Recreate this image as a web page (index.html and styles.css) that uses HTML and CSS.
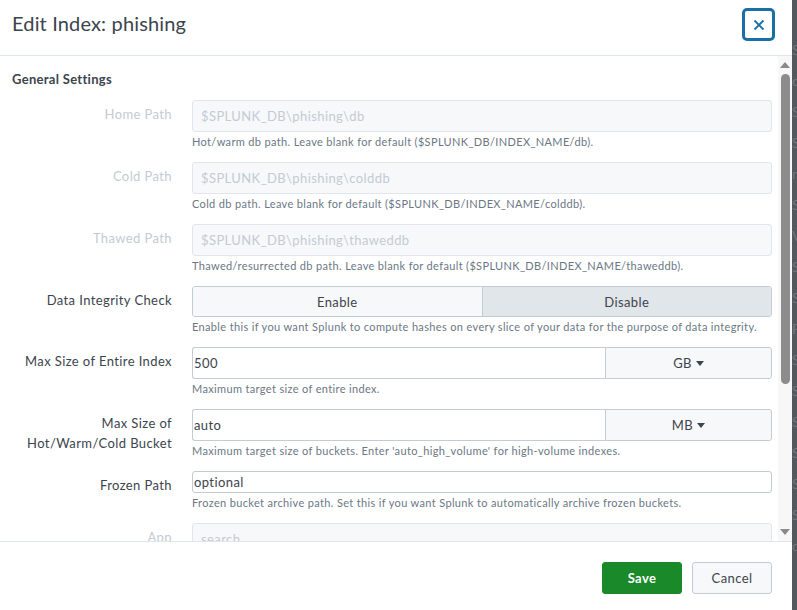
FILE: index.html
```html
<!DOCTYPE html>
<html>
<head>
<meta charset="utf-8">
<link rel="stylesheet" href="styles.css">
</head>
<body>
<div class="page">
  <div class="modal">
    <div class="header">
      <h1 class="title">Edit Index: phishing</h1>
      <button class="close" aria-label="Close">
        <svg width="12" height="12" viewBox="0 0 12 12"><path d="M1.5 1.5 L10.5 10.5 M10.5 1.5 L1.5 10.5" stroke="#1a70a6" stroke-width="1.8" fill="none"/></svg>
      </button>
    </div>
    <div class="body">
      <div class="content">
        <div class="section">General Settings</div>
        <div class="form">
          <div class="label disabled">Home Path</div>
          <div class="control">
            <div class="input input-disabled">$SPLUNK_DB\phishing\db</div>
            <div class="help">Hot/warm db path. Leave blank for default ($SPLUNK_DB/INDEX_NAME/db).</div>
          </div>

          <div class="label disabled">Cold Path</div>
          <div class="control">
            <div class="input input-disabled">$SPLUNK_DB\phishing\colddb</div>
            <div class="help">Cold db path. Leave blank for default ($SPLUNK_DB/INDEX_NAME/colddb).</div>
          </div>

          <div class="label disabled">Thawed Path</div>
          <div class="control">
            <div class="input input-disabled">$SPLUNK_DB\phishing\thaweddb</div>
            <div class="help">Thawed/resurrected db path. Leave blank for default ($SPLUNK_DB/INDEX_NAME/thaweddb).</div>
          </div>

          <div class="label">Data Integrity Check</div>
          <div class="control">
            <div class="segmented">
              <div class="seg">Enable</div>
              <div class="seg seg-on">Disable</div>
            </div>
            <div class="help">Enable this if you want Splunk to compute hashes on every slice of your data for the purpose of data integrity.</div>
          </div>

          <div class="label">Max Size of Entire Index</div>
          <div class="control">
            <div class="combo">
              <div class="input input-text">500</div>
              <div class="unit">GB <span class="caret"></span></div>
            </div>
            <div class="help">Maximum target size of entire index.</div>
          </div>

          <div class="label">Max Size of<br>Hot/Warm/Cold Bucket</div>
          <div class="control">
            <div class="combo">
              <div class="input input-text">auto</div>
              <div class="unit">MB <span class="caret"></span></div>
            </div>
            <div class="help">Maximum target size of buckets. Enter 'auto_high_volume' for high-volume indexes.</div>
          </div>

          <div class="label">Frozen Path</div>
          <div class="control">
            <div class="input input-text input-short">optional</div>
            <div class="help">Frozen bucket archive path. Set this if you want Splunk to automatically archive frozen buckets.</div>
          </div>

          <div class="label disabled">App</div>
          <div class="control">
            <div class="input input-disabled">search</div>
          </div>
        </div>
      </div>
      <div class="scrollbar">
        <span class="arrow arrow-up"></span>
        <div class="track"><div class="thumb"></div></div>
        <span class="arrow arrow-down"></span>
      </div>
    </div>
    <div class="footer">
      <button class="btn btn-save">Save</button>
      <button class="btn btn-cancel">Cancel</button>
    </div>
  </div>
  <div class="backdrop">
    <span>S</span><span>d</span><span>S</span><span>S</span><span>ne</span><span>S</span><span>V</span><span>S</span><span>S</span><span>P</span><span>S</span><span>S</span><span>S</span><span>S</span><span>S</span><span>S</span><span>d</span>
  </div>
</div>
</body>
</html>
```

FILE: styles.css
```css
* { box-sizing: border-box; }
html, body { margin: 0; padding: 0; }
body {
  font-family: "Lato", "Open Sans", sans-serif;
  color: #3c444d;
  background: #53585f;
}
.page {
  display: flex;
  width: 797px;
  height: 610px;
  overflow: hidden;
}
.modal {
  width: 792px;
  height: 610px;
  background: #fff;
  display: flex;
  flex-direction: column;
  flex: none;
}
.header {
  height: 56px;
  border-bottom: 1px solid #e1e6eb;
  display: flex;
  align-items: flex-start;
  justify-content: space-between;
  padding: 8px 17px 0 12px;
  flex: none;
}
.title {
  margin: 3px 0 0;
  font-size: 20px;
  font-weight: 400;
  line-height: 24px;
  letter-spacing: 0.15px;
  color: #3c444d;
}
.close {
  width: 33px;
  height: 33px;
  border: 3px solid #1a70a6;
  border-radius: 5px;
  background: #fff;
  padding: 0;
  display: flex;
  align-items: center;
  justify-content: center;
}
.body {
  flex: 1;
  display: flex;
  min-height: 0;
  overflow: hidden;
}
.content {
  flex: 1;
  padding: 15px 6px 0 12px;
  overflow: hidden;
}
.section {
  font-size: 13px;
  font-weight: 700;
  line-height: 16px;
  letter-spacing: 0.3px;
  margin-bottom: 13px;
}
.form {
  display: grid;
  grid-template-columns: 160px 580px;
  column-gap: 20px;
  row-gap: 13px;
}
.label {
  text-align: right;
  font-size: 13px;
  line-height: 20px;
  letter-spacing: 0.4px;
  padding-top: 4px;
  color: #3c444d;
}
.label.disabled { color: #c3cbd4; }
.control { display: flex; flex-direction: column; }
.input {
  height: 32px;
  border-radius: 3px;
  font-size: 13px;
  letter-spacing: 0.4px;
  display: flex;
  align-items: center;
}
.input-disabled {
  background: #f7f8fa;
  border: 1px solid #e1e6eb;
  color: #c3cbd4;
  padding: 0 8px;
}
.input-text {
  border: 1px solid #c3cbd4;
  background: #fff;
  color: #3c444d;
  padding: 0 1px;
}
.input-short { height: 22px; }
.help {
  margin-top: 3px;
  font-size: 11px;
  line-height: 14px;
  letter-spacing: 0.35px;
  color: #6b7785;
}
.segmented {
  display: flex;
  height: 31px;
  border: 1px solid #c3cbd4;
  border-radius: 3px;
  overflow: hidden;
}
.seg {
  flex: 1;
  display: flex;
  align-items: center;
  justify-content: center;
  font-size: 13px;
  letter-spacing: 0.4px;
  background: #f7f8fa;
}
.seg + .seg { border-left: 1px solid #c3cbd4; }
.seg-on { background: #e1e6eb; }
.combo { display: flex; }
.combo .input-text {
  flex: 1;
  border-radius: 3px 0 0 3px;
  border-right: none;
}
.unit {
  width: 167px;
  height: 32px;
  border: 1px solid #c3cbd4;
  border-radius: 0 3px 3px 0;
  background: #f7f8fa;
  display: flex;
  align-items: center;
  justify-content: center;
  gap: 4px;
  font-size: 13px;
  letter-spacing: 0.4px;
}
.caret {
  width: 0;
  height: 0;
  border-left: 4px solid transparent;
  border-right: 4px solid transparent;
  border-top: 5px solid #3c444d;
}
.scrollbar {
  width: 14px;
  background: #f7f7f7;
  display: flex;
  flex-direction: column;
  align-items: center;
  padding: 6px 0 6px;
  flex: none;
}
.arrow {
  width: 0;
  height: 0;
  border-left: 5px solid transparent;
  border-right: 5px solid transparent;
}
.arrow-up { border-bottom: 6px solid #8a8a8a; }
.arrow-down { border-top: 6px solid #8a8a8a; }
.track {
  flex: 1;
  width: 100%;
  display: flex;
  justify-content: center;
  padding-top: 6px;
}
.thumb {
  width: 9px;
  height: 310px;
  background: #8c8c8c;
  border-radius: 5px;
}
.footer {
  height: 69px;
  border-top: 1px solid #e1e6eb;
  display: flex;
  justify-content: flex-end;
  align-items: flex-start;
  gap: 10px;
  padding: 20px 20px 0 0;
  flex: none;
}
.btn {
  width: 80px;
  height: 32px;
  border-radius: 3px;
  font-family: "Lato", "Open Sans", sans-serif;
  font-size: 13px;
  letter-spacing: 0.4px;
}
.btn-save {
  background: #1a8929;
  border: 1px solid #1a8929;
  color: #fff;
  font-weight: 700;
}
.btn-cancel {
  background: #f7f8fa;
  border: 1px solid #c3cbd4;
  color: #3c444d;
}
.backdrop {
  flex: 1;
  display: flex;
  flex-direction: column;
  font-family: "Lato", sans-serif;
  font-size: 14px;
  line-height: 31px;
  color: #70757c;
  padding-top: 34px;
  white-space: nowrap;
  overflow: hidden;
}
```
